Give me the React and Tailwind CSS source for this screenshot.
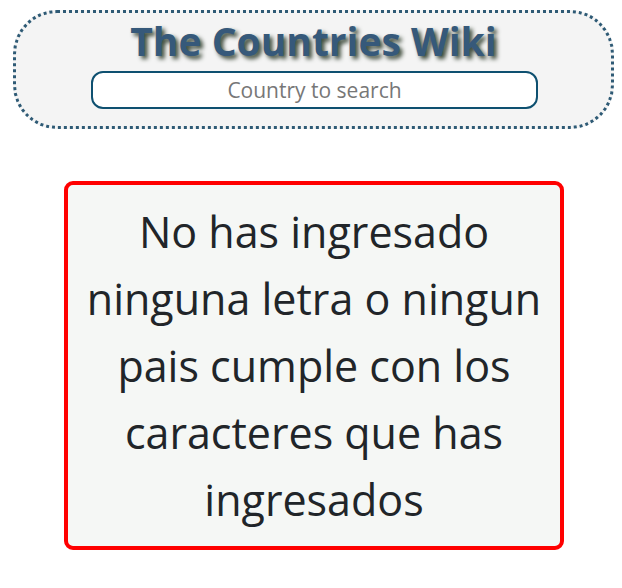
import React from 'react';

export default function App() {
  return (
    <div className="min-h-[588px] bg-white pt-[10px]" style={{ fontFamily: '"Open Sans", "Noto Sans", sans-serif' }}>
      <header className="ml-[13px] w-[601px] h-[119px] rounded-[44px] border-[3px] border-dotted border-[#2e5a75] bg-[#f4f4f4] flex flex-col items-center pt-[5px]">
        <h1
          className="text-[39px] leading-[46px] font-bold text-[#36597a]"
          style={{ textShadow: '3px 3px 4px #3d4a3a' }}
        >
          The Countries Wiki
        </h1>
        <input
          type="text"
          placeholder="Country to search"
          className="mt-[7px] ml-[2px] w-[447px] h-[38px] rounded-[12px] border-2 border-[#0e5070] bg-white text-center text-[21px] text-[#444] placeholder:text-[#777777] outline-none"
        />
      </header>

      <div className="ml-[64px] mt-[52px] w-[500px] h-[369px] rounded-[9px] border-4 border-[#ff0000] bg-[#f5f7f5] flex items-center justify-center px-[8px]">
        <p className="text-center text-[43px] leading-[67px] text-[#212529]">
          No has ingresado ninguna letra o ningun pais cumple con los caracteres que has ingresados
        </p>
      </div>
    </div>
  );
}
